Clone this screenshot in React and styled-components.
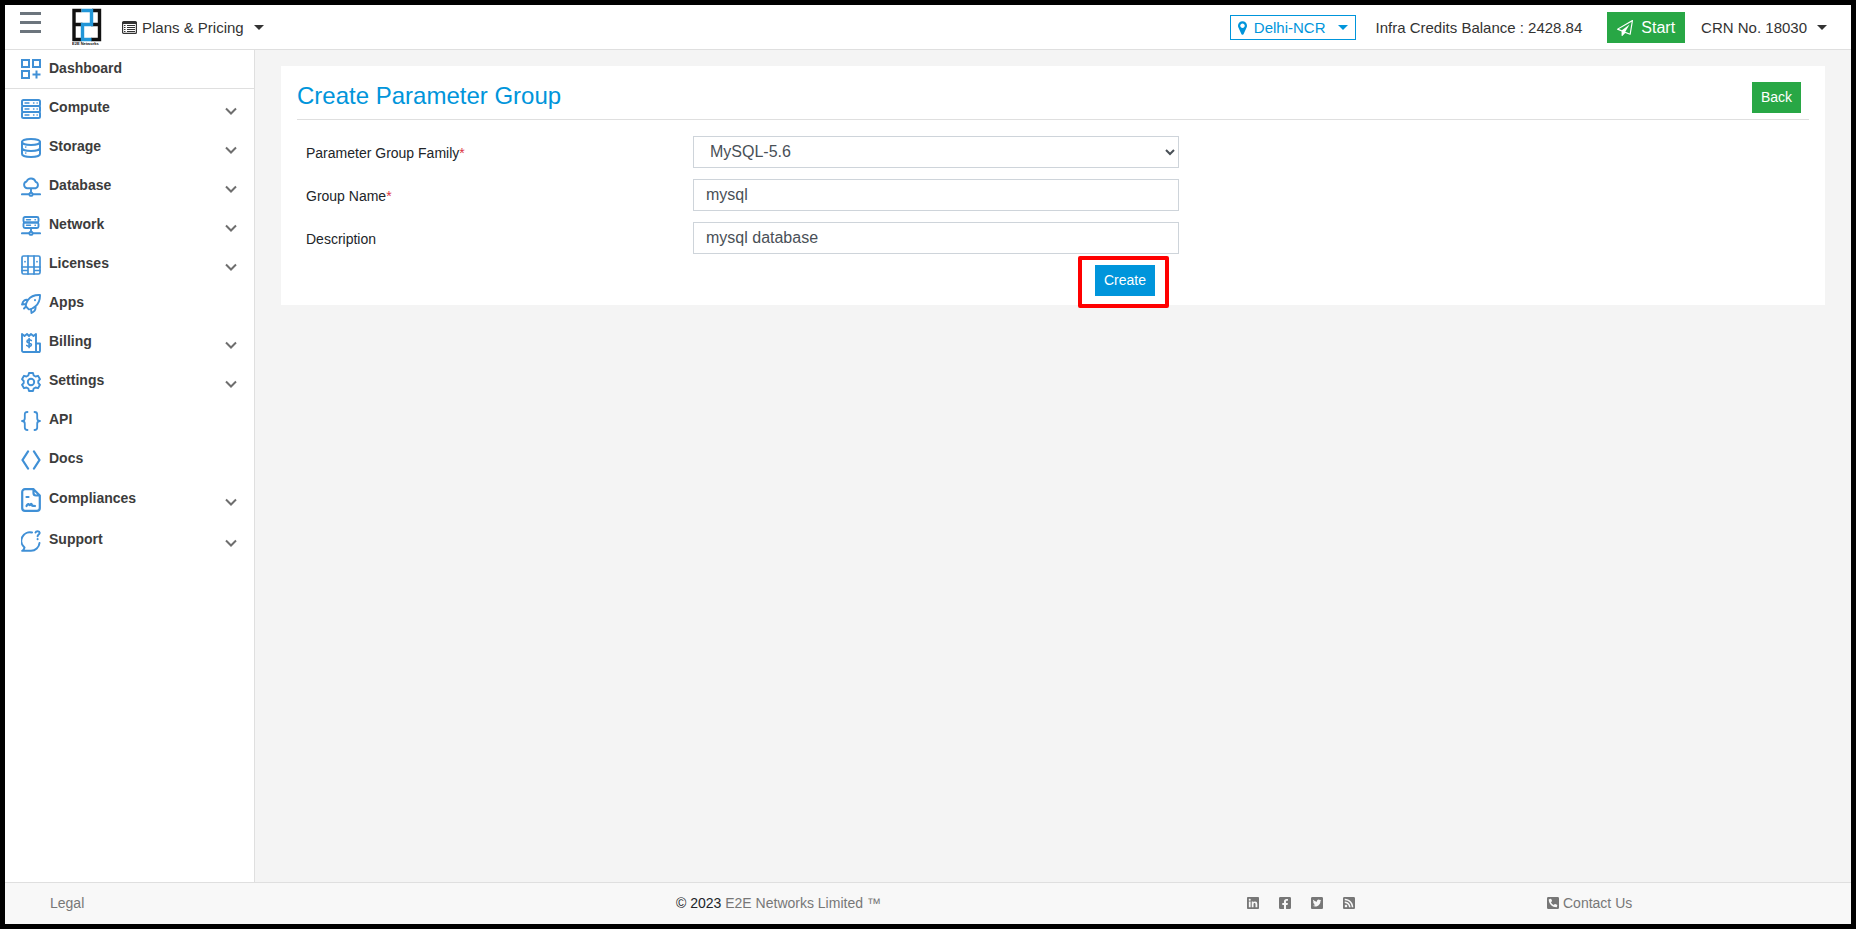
import React from 'react'
import styled, { createGlobalStyle } from 'styled-components'
import { FaLinkedin, FaFacebookSquare, FaTwitterSquare, FaRssSquare, FaPhoneSquareAlt } from 'react-icons/fa'

const GlobalStyle = createGlobalStyle`
    *, *::before, *::after {
        box-sizing: border-box;
    }
    body {
        margin: 0;
        font-family: "Liberation Sans", Arial, sans-serif;
        font-size: 14px;
        line-height: 20px;
        color: #212529;
    }
    a {
        color: inherit;
        text-decoration: none;
    }
    button, input, select {
        font-family: inherit;
        margin: 0;
    }
    svg {
        display: block;
        flex: none;
    }
`

const Screen = styled.div`
    min-height: 100vh;
    border: 5px solid black;
    display: flex;
    flex-direction: column;
    background-color: #f4f4f4;
`

const Header = styled.header`
    height: 45px;
    padding: 1px 24px 0 15px;
    display: flex;
    align-items: center;
    background-color: white;
    border-bottom: 1px solid #dfdfdf;
    font-size: 15px;
    line-height: 21px;
    color: #333;
`

const MenuButton = styled.button`
    align-self: flex-start;
    margin-top: 6px;
    padding: 0;
    border: none;
    background: none;
    color: #6c757d;
    cursor: pointer;
`

const LogoLink = styled.a`
    margin: 0 20px 0 31px;
`

const HeaderButton = styled.button`
    display: flex;
    align-items: center;
    gap: 5px;
    padding: 0;
    border: none;
    background: none;
    color: #333;
    font-size: 15px;
    line-height: 21px;
    cursor: pointer;
`

const Caret = styled.span`
    margin-left: 5px;
    border-top: 5px solid;
    border-left: 5px solid transparent;
    border-right: 5px solid transparent;
`

const HeaderRight = styled.div`
    margin-left: auto;
    display: flex;
    align-items: center;
    gap: 16px;
`

const RegionButton = styled(HeaderButton)`
    height: 25px;
    padding: 0 7px;
    gap: 7px;
    border: 1px solid #0095db;
    color: #0095db;
`

const Balance = styled.span`
    padding: 0 4px;
`

const StartButton = styled.button`
    display: flex;
    align-items: center;
    gap: 8px;
    height: 31px;
    margin-left: 5px;
    padding: 0 10px;
    border: none;
    background-color: #28a745;
    color: white;
    font-size: 16px;
    cursor: pointer;
`

const Body = styled.div`
    flex: 1;
    display: flex;
`

const Sidebar = styled.nav`
    width: 250px;
    flex: none;
    background-color: white;
    border-right: 1px solid #dfdfdf;
`

const MenuItem = styled.a`
    display: flex;
    align-items: center;
    height: ${props => props.$height || 39}px;
    padding: 0 17px 0 16px;
    border-bottom: ${props => props.$divided ? '1px solid #dfdfdf' : 'none'};
    color: #4090d6;
`

const MenuText = styled.span`
    flex: 1;
    padding-bottom: ${props => props.$divided ? 2 : 4}px;
    margin-left: 8px;
    font-weight: bold;
    color: #3c3c3c;
`

const Arrow = styled.svg`
    margin-top: 4px;
    color: #6e6e6e;
`

const Main = styled.main`
    flex: 1;
    padding: 16px 26px;
`

const Card = styled.section`
    padding: 16px 16px 9px;
    background-color: white;
`

const CardHead = styled.div`
    display: flex;
    justify-content: space-between;
    padding: 0 8px 6px 0;
    margin-bottom: 16px;
    border-bottom: 1px solid #dfdfdf;
`

const Title = styled.h1`
    margin: 0;
    font-size: 24px;
    line-height: 28px;
    font-weight: 400;
    color: #0095db;
`

const SmallButton = styled.button`
    height: 31px;
    padding: 0 9px 2px;
    border: none;
    background-color: ${props => props.$green ? '#28a745' : '#0095db'};
    color: white;
    font-size: 14px;
    cursor: pointer;
`

const Form = styled.form`
    display: grid;
    gap: 11px;
    margin: 0 -30px 0 -6px;
`

const Row = styled.div`
    display: grid;
    grid-template-columns: 3fr 4fr 5fr;
`

const Label = styled.label`
    padding: 7px 15px 0;
`

const Required = styled.span`
    color: #dc3545;
`

const Cell = styled.div`
    grid-column: 2;
    padding: 0 15px;
    display: flex;
    justify-content: flex-end;
`

const Input = styled.input`
    width: 100%;
    height: 32px;
    padding: 0 12px 1px;
    border: 1px solid #ced4da;
    background-color: white;
    color: #495057;
    font-size: 16px;
`

const Select = styled.select`
    width: 100%;
    height: 32px;
    padding: 0 0 2px 12px;
    border: 1px solid #ced4da;
    border-radius: 0;
    background-color: white;
    color: #495057;
    font-size: 16px;
`

const CreateWrap = styled.div`
    position: relative;
    margin-right: 24px;
`

const Highlight = styled.span`
    position: absolute;
    top: -9px;
    right: -14px;
    bottom: -12px;
    left: -17px;
    border: 4px solid #ff0000;
    border-radius: 2px;
    pointer-events: none;
`

const Footer = styled.footer`
    display: grid;
    grid-template-columns: 626fr 571fr 300fr 304fr;
    align-items: center;
    height: 42px;
    padding: 0 0 2px 45px;
    border-top: 1px solid #dfdfdf;
    background-color: #f8f8f8;
    color: #777;

    svg {
        width: 12px;
        height: 14px;
    }
`

const Copyright = styled.span`
    color: #212529;
`

const Social = styled.div`
    display: flex;
    gap: 20px;
`

const Contact = styled.a`
    display: flex;
    align-items: center;
    gap: 4px;
`

const Muted = styled.a`
    color: #777;
`

const Icon = ({ children, height = 20, width = 2 }) => (
    <svg width="20" height={height} viewBox={`0 0 20 ${height}`} fill="none" stroke="currentColor" strokeWidth={width} strokeLinecap="round" strokeLinejoin="round">
        {children}
    </svg>
)

const icons = {
    dashboard: (
        <Icon>
            <path d="M1 1h7v7H1zM12 1h7v7h-7zM1 12h7v7H1zM15.500 11.500v8M11.500 15.500h8" strokeLinecap="butt" strokeLinejoin="miter" />
        </Icon>
    ),
    compute: (
        <Icon>
            <rect x="1" y="1" width="18" height="6" rx="1.500" />
            <rect x="1" y="7" width="18" height="6" rx="1.500" />
            <rect x="1" y="13" width="18" height="6" rx="1.500" />
            <path d="M4 4h4M4 10h4M4 16h4M12.500 4h.5M16 4h.3M12.500 10h.5M16 10h.3M12.500 16h.5M16 16h.3" strokeWidth="1.300" />
        </Icon>
    ),
    storage: (
        <Icon>
            <ellipse cx="10" cy="4" rx="9" ry="3" />
            <path d="M1 4v12c0 1.700 4 3 9 3s9-1.300 9-3V4M1 10c0 1.700 4 3 9 3s9-1.300 9-3" />
            <path d="M4.800 9v.1M4.800 15v.1" strokeWidth="1.600" />
        </Icon>
    ),
    database: (
        <Icon width={1.9}>
            <path d="M6 11.300a3.500 3.500 0 0 1-.4-6.800A4.800 4.800 0 0 1 14.600 4.800 3.400 3.400 0 0 1 14.500 11.300zM10 11.500v4M.9 17.300h7.100M12 17.300h7.100" />
            <circle cx="10" cy="17.300" r="1.600" />
        </Icon>
    ),
    network: (
        <Icon width={1.9}>
            <rect x="2.500" y="1" width="15" height="5.500" rx="1.500" />
            <rect x="2.500" y="6.500" width="15" height="5.500" rx="1.500" />
            <path d="M5.500 3.800h4M5.500 9.300h4M14 3.800h.4M14 9.300h.4" strokeWidth="1.400" />
            <path d="M10 12v3.500M.9 17.300h7.100M12 17.300h7.100" />
            <circle cx="10" cy="17.300" r="1.600" />
        </Icon>
    ),
    licenses: (
        <Icon width={1.7}>
            <rect x="1" y="1" width="18" height="18" rx="1.500" />
            <path d="M7 1v18M13 1v18M1 12h6M1 15.500h6M13 12h6M13 15.500h6M7 12h6M4 6.500v.2M16 6.500v.2" />
        </Icon>
    ),
    apps: (
        <Icon width={1.9}>
            <path d="M19 1c-6-.3-9.500 1.500-12 5C5.300 8.500 4.500 11 5 12.500L7.800 15.300c2 .2 4.500-1 6.700-3C17.500 9.500 19.200 6.500 19 1zM7 6C4 5 2 7 1 10.500l4-.5M14.500 12.300c.5 3-.5 5-4 6.700L10 15" />
            <path d="M14 6v.2M5 12.500L3 14.500" />
        </Icon>
    ),
    billing: (
        <Icon width={1.9}>
            <path d="M17 19H2.500A1.500 1.500 0 0 1 1 17.500V1l2.500 2L6 1l2 2 2-2 2.500 2L15 1v16.500a2 2 0 0 0 4 0V10.500h-4" />
            <path d="M10.300 7.500C9 6.300 6 6.600 6 8.400c0 2.100 4.400 1.200 4.400 3.400 0 1.800-3.200 2-4.600.7M8.100 5.500v9" strokeWidth="1.700" />
        </Icon>
    ),
    settings: (
        <Icon width={1.9}>
            <path d="M8 1h4l.7 2.500 1.800 1L17 3.800l2 3.400L17.300 9v2l1.700 1.800-2 3.400-2.500-.7-1.800 1L12 19H8l-.7-2.500-1.800-1-2.500.7-2-3.400L2.700 11V9L1 7.200l2-3.400 2.500.7 1.800-1z" />
            <circle cx="10" cy="10" r="3.200" />
        </Icon>
    ),
    api: (
        <Icon width={1.8}>
            <path d="M6.500 1C4.300 1 3.800 2 3.800 3.500v3.700C3.800 8.800 2.500 10 1 10c1.500 0 2.800 1.200 2.800 2.800v3.700c0 1.500.5 2.500 2.700 2.500M13.500 1c2.200 0 2.700 1 2.700 2.500v3.700c0 1.600 1.300 2.800 2.800 2.800-1.500 0-2.800 1.200-2.800 2.800v3.700c0 1.500-.5 2.500-2.700 2.500" />
        </Icon>
    ),
    docs: (
        <Icon width={2.3}>
            <path d="M7 1.500L1.500 10 7 18.500M13 1.500l5.500 8.500-5.500 8.500" />
        </Icon>
    ),
    compliances: (
        <Icon height={24} width={2.2}>
            <path d="M12.500 1.200H4a2.800 2.800 0 0 0-2.800 2.800v16A2.800 2.800 0 0 0 4 22.800h12a2.800 2.800 0 0 0 2.800-2.800V7.500zM12.500 1.200v3.800a2.500 2.500 0 0 0 2.500 2.500h3.800" />
            <path d="M5.500 9h2M5.500 18c1-2 2-2.500 2.500-1.500s1 1 1.500 0 1.300-.5 1.500.7 1.500.3 3 .8" />
        </Icon>
    ),
    support: (
        <Icon height={22} width={2}>
            <path d="M11 2.500A8.600 8.600 0 0 0 3.500 17.500c-.3 1.500-1 2.700-2.300 3.300H10A8.600 8.600 0 0 0 18.500 13" />
            <path d="M14.500 2.500c.6-1.800 4-1.800 4.200.3 0 1.700-2 1.700-2.100 3.400M16.600 9v.2" />
        </Icon>
    )
}

const menu = [
    { name: 'Dashboard', icon: 'dashboard', divided: true },
    { name: 'Compute', icon: 'compute', arrow: true },
    { name: 'Storage', icon: 'storage', arrow: true },
    { name: 'Database', icon: 'database', arrow: true },
    { name: 'Network', icon: 'network', arrow: true },
    { name: 'Licenses', icon: 'licenses', arrow: true },
    { name: 'Apps', icon: 'apps' },
    { name: 'Billing', icon: 'billing', arrow: true },
    { name: 'Settings', icon: 'settings', arrow: true },
    { name: 'API', icon: 'api' },
    { name: 'Docs', icon: 'docs' },
    { name: 'Compliances', icon: 'compliances', arrow: true, height: 41 },
    { name: 'Support', icon: 'support', arrow: true, height: 41 }
]

const Logo = () => (
    <svg width="30" height="39" viewBox="0 0 30 39" fill="none">
        <path d="M9.500 2.500H2v29h8M20 2.500h7.500v29H19M2 16.500h8.500M19 16.500h8.500" stroke="#111" strokeWidth="3.400" />
        <path d="M9.500 2.500h10v14h-9v15h9" stroke="#2196d8" strokeWidth="3.400" />
        <text x="0" y="37" fontSize="4" fontWeight="bold" fill="#111">E2E Networks</text>
    </svg>
)

const PinIcon = () => (
    <svg width="9" height="14" viewBox="0 384 1024 1536" fill="currentColor" fillRule="evenodd">
        <path d="M768 896q0 106-75 181t-181 75-181-75-75-181 75-181 181-75 181 75 75 181zm256 0q0 109-33 179l-364 774q-16 33-47.500 52t-67.500 19-67.500-19-46.500-52l-365-774q-33-70-33-179 0-212 150-362t362-150 362 150 150 362z" />
    </svg>
)

const PlaneIcon = () => (
    <svg width="16" height="16" viewBox="0 0 1792 1792" fill="currentColor">
        <path d="M1764 11q33 24 27 64l-256 1536q-5 29-32 45-14 8-31 8-11 0-24-5l-527-215-298 327q-18 21-47 21-14 0-23-4-19-7-30-23.500t-11-36.500v-452l-472-193q-37-14-40-55-3-39 32-59l1664-960q35-21 68 2zm-342 1499l221-1323-1434 827 336 137 863-639-478 797z" />
    </svg>
)

const ListIcon = () => (
    <svg width="15" height="13" viewBox="0 0 15 13" fill="none" stroke="currentColor">
        <rect x=".6" y=".6" width="13.800" height="11.800" rx="1" strokeWidth="1.200" />
        <path d="M0 2h15" strokeWidth="2" />
        <path d="M2 4.500h1.500M5 4.500h8M2 6.500h1.500M5 6.500h8M2 8.500h1.500M5 8.500h8M2 10.500h1.500M5 10.500h8" strokeWidth="1" />
    </svg>
)

const App = () => {
    return (
        <Screen>
            <GlobalStyle />
            <Header>
                <MenuButton aria-label="Toggle menu">
                    <svg width="21" height="21" viewBox="0 0 21 21" stroke="currentColor" strokeWidth="3">
                        <path d="M0 1.500h21M0 10.500h21M0 19.500h21" />
                    </svg>
                </MenuButton>
                <LogoLink href="#" aria-label="Home"><Logo /></LogoLink>
                <HeaderButton>
                    <ListIcon />
                    Plans &amp; Pricing
                    <Caret />
                </HeaderButton>
                <HeaderRight>
                    <RegionButton>
                        <PinIcon />
                        Delhi-NCR
                        <Caret />
                    </RegionButton>
                    <Balance>Infra Credits Balance : 2428.84</Balance>
                    <StartButton>
                        <PlaneIcon />
                        Start
                    </StartButton>
                    <HeaderButton>
                        CRN No. 18030
                        <Caret />
                    </HeaderButton>
                </HeaderRight>
            </Header>
            <Body>
                <Sidebar>
                    {menu.map(item => (
                        <MenuItem href="#" key={item.name} $height={item.height} $divided={item.divided}>
                            {icons[item.icon]}
                            <MenuText $divided={item.divided}>{item.name}</MenuText>
                            {item.arrow && (
                                <Arrow width="12" height="8" viewBox="0 0 12 8" fill="none" stroke="currentColor" strokeWidth="2">
                                    <path d="M1 1.500l5 5 5-5" />
                                </Arrow>
                            )}
                        </MenuItem>
                    ))}
                </Sidebar>
                <Main>
                    <Card>
                        <CardHead>
                            <Title>Create Parameter Group</Title>
                            <SmallButton $green>Back</SmallButton>
                        </CardHead>
                        <Form onSubmit={e => e.preventDefault()}>
                            <Row>
                                <Label htmlFor="family">Parameter Group Family<Required>*</Required></Label>
                                <Cell>
                                    <Select id="family" defaultValue="5.6">
                                        <option value="5.6">MySQL-5.6</option>
                                    </Select>
                                </Cell>
                            </Row>
                            <Row>
                                <Label htmlFor="name">Group Name<Required>*</Required></Label>
                                <Cell><Input id="name" defaultValue="mysql" /></Cell>
                            </Row>
                            <Row>
                                <Label htmlFor="description">Description</Label>
                                <Cell><Input id="description" defaultValue="mysql database" /></Cell>
                            </Row>
                            <Row>
                                <Cell>
                                    <CreateWrap>
                                        <SmallButton type="submit">Create</SmallButton>
                                        <Highlight />
                                    </CreateWrap>
                                </Cell>
                            </Row>
                        </Form>
                    </Card>
                </Main>
            </Body>
            <Footer>
                <div><a href="#">Legal</a></div>
                <Copyright>© 2023 <Muted href="#">E2E Networks Limited ™</Muted></Copyright>
                <Social>
                    <a href="#" aria-label="LinkedIn"><FaLinkedin /></a>
                    <a href="#" aria-label="Facebook"><FaFacebookSquare /></a>
                    <a href="#" aria-label="Twitter"><FaTwitterSquare /></a>
                    <a href="#" aria-label="RSS"><FaRssSquare /></a>
                </Social>
                <Contact href="#"><FaPhoneSquareAlt />Contact Us</Contact>
            </Footer>
        </Screen>
    )
}

export default App
